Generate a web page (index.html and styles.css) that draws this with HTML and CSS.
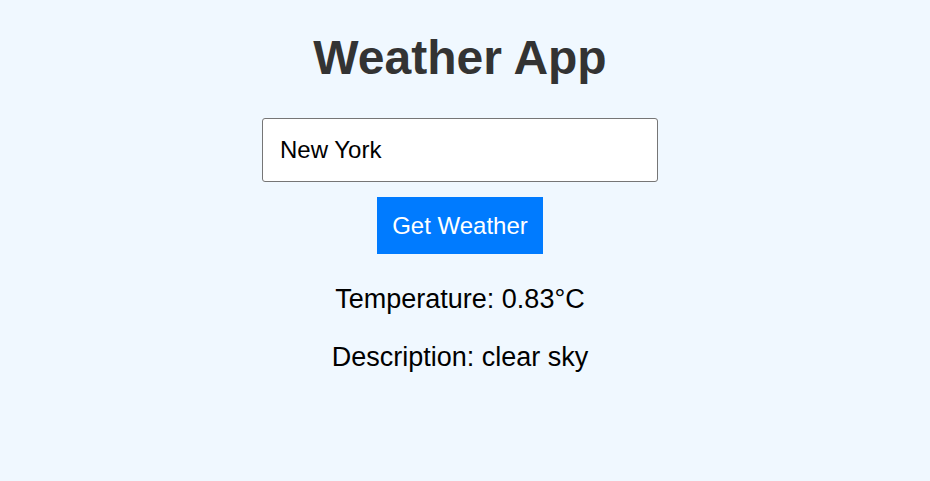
FILE: index.html
```html
<!DOCTYPE html>
<html lang="en">
<head>
<meta charset="utf-8">
<title>Weather App</title>
<link rel="stylesheet" href="styles.css">
</head>
<body>
<main class="app">
  <h1 class="title">Weather App</h1>
  <input class="city" type="text" value="New York">
  <button class="get-btn" type="button">Get Weather</button>
  <div class="result">
    <p class="line">Temperature: 0.83°C</p>
    <p class="line">Description: clear sky</p>
  </div>
</main>
</body>
</html>
```

FILE: styles.css
```css
html, body {
  margin: 0;
  padding: 0;
  background: #f0f8ff;
  font-family: "Liberation Sans", Arial, sans-serif;
}

.app {
  display: flex;
  flex-direction: column;
  align-items: center;
  padding-right: 10px;
  padding-top: 30px;
}

.title {
  margin: 0;
  font-size: 48px;
  line-height: 56px;
  font-weight: bold;
  color: #333333;
}

.city {
  margin-top: 32px;
  box-sizing: border-box;
  width: 396px;
  height: 64px;
  padding: 0 17px;
  border: 1px solid #767676;
  border-radius: 3px;
  background: #ffffff;
  font-family: "Liberation Sans", Arial, sans-serif;
  font-size: 24px;
  color: #000000;
  outline: none;
}

.get-btn {
  margin-top: 15px;
  box-sizing: border-box;
  height: 57px;
  padding: 0 15px;
  border: none;
  border-radius: 0;
  background: #007bff;
  color: #ffffff;
  font-family: "Liberation Sans", Arial, sans-serif;
  font-size: 24px;
}

.result {
  margin-top: 30px;
  display: flex;
  flex-direction: column;
  align-items: center;
  gap: 27px;
}

.line {
  margin: 0;
  font-size: 27px;
  line-height: 31px;
  color: #000000;
}
```
